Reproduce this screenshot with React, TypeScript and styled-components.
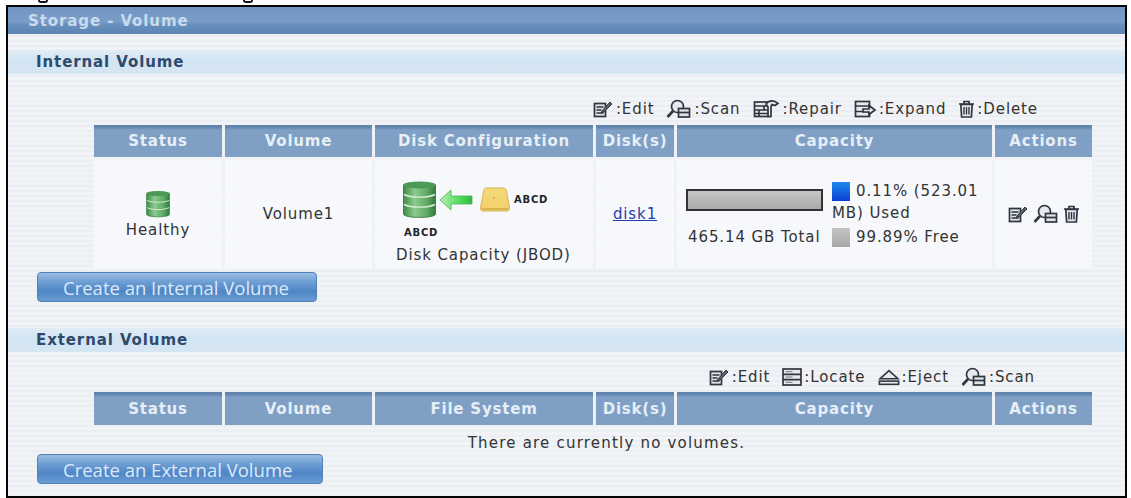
import styled, { createGlobalStyle } from "styled-components";

const GlobalStyle = createGlobalStyle`
  html, body {
    margin: 0;
    padding: 0;
    background: #ffffff;
  }
`;

const BODY_FONT = `"DejaVu Sans", Verdana, sans-serif`;

const EditIcon = () => (
  <svg width="21" height="20" viewBox="0 0 21 20" fill="none" stroke="#2f3641" strokeWidth="1.7">
    <rect x="1.5" y="4.5" width="11" height="13" fill="#dfe3e8" />
    <path d="M3.5 8h7M3.5 11h5M3.5 14h7" />
    <path d="M9 12l8-9 2 2-8 8-3 1z" fill="#59616d" stroke="#2f3641" strokeWidth="1" />
  </svg>
);

const ScanIcon = () => (
  <svg width="26" height="20" viewBox="0 0 26 20" fill="none" stroke="#2f3641" strokeWidth="1.7">
    <circle cx="11.5" cy="7.5" r="6" fill="#e6e9ee" />
    <path d="M7 12L1.5 18" strokeWidth="2.6" />
    <rect x="12.5" y="9.5" width="11" height="8.5" fill="#dfe3e8" />
    <path d="M12.5 13.5h11" />
  </svg>
);

const RepairIcon = () => (
  <svg width="28" height="20" viewBox="0 0 28 20" fill="none" stroke="#2f3641" strokeWidth="1.7">
    <rect x="1.5" y="3" width="15" height="14.5" fill="#e6e9ee" />
    <path d="M1.5 7h15M1.5 11h15M1.5 14.5h15M6 11v6.5M11 7v4" />
    <path d="M13 5c3-4 8-4 12-.5l-3 2-3-1-1 2v10h-3V8z" fill="#e6e9ee" />
  </svg>
);

const ExpandIcon = () => (
  <svg width="23" height="20" viewBox="0 0 23 20" fill="none" stroke="#2f3641" strokeWidth="1.7">
    <rect x="1.5" y="2.5" width="14" height="15" fill="#e6e9ee" />
    <path d="M1.5 7h14M1.5 12.5h14" />
    <path d="M9 10h6V6.5l6 4.5-6 4.5V13H9z" fill="#e6e9ee" />
  </svg>
);

const TrashIcon = () => (
  <svg width="17" height="20" viewBox="0 0 17 20" fill="none" stroke="#2f3641" strokeWidth="1.7">
    <path d="M1 5h15M6 5V2.5h5V5" />
    <path d="M2.8 5.5l.8 12.5h9.8l.8-12.500z" fill="#e6e9ee" />
    <path d="M6 8v7.5M8.5 8v7.5M11 8v7.5" strokeWidth="1.4" />
  </svg>
);

const LocateIcon = () => (
  <svg width="20" height="20" viewBox="0 0 20 20" fill="none" stroke="#2f3641" strokeWidth="1.7">
    <rect x="1" y="2" width="18" height="16" fill="#e6e9ee" />
    <path d="M1 7.3h18M1 12.6h18" />
    <path d="M3.5 4.7h7M3.5 10h7M3.5 15.3h7" strokeWidth="1" stroke="#6f7680" />
  </svg>
);

const EjectIcon = () => (
  <svg width="22" height="20" viewBox="0 0 24 20" fill="none" stroke="#2f3641" strokeWidth="1.7">
    <path d="M12 3L22 12H2z" fill="#e6e9ee" />
    <rect x="1.5" y="14.5" width="21" height="3.5" fill="#e6e9ee" />
  </svg>
);

const Cylinder = ({ id, width, height }: { id: string; width: number; height: number }) => (
  <svg width={width} height={height} viewBox="0 0 33 39">
    <defs>
      <linearGradient id={id} x1="0" x2="1" y1="0" y2="0">
        <stop offset="0" stopColor="#3f8a48" />
        <stop offset="0.35" stopColor="#8ccb8d" />
        <stop offset="0.75" stopColor="#5da865" />
        <stop offset="1" stopColor="#2f7a3a" />
      </linearGradient>
    </defs>
    <path d="M0.5 5C0.5 2 32.5 2 32.5 5V34C32.5 38.5 0.5 38.5 0.5 34Z" fill={`url(#${id})`} stroke="#3d8547" />
    <ellipse cx="16.5" cy="5" rx="16" ry="3.6" fill="#4c9a55" />
    <path d="M1 14.5C8 18 25 18 32 14.5M1 24.5C8 28 25 28 32 24.5" fill="none" stroke="#d6eed6" strokeWidth="1.4" />
  </svg>
);

const GreenArrow = () => (
  <svg width="34" height="22" viewBox="0 0 34 22">
    <defs>
      <linearGradient id="arrowFill" x1="0" x2="1" y1="0" y2="0">
        <stop offset="0" stopColor="#b7f0b7" />
        <stop offset="0.6" stopColor="#55dc5c" />
        <stop offset="1" stopColor="#34b53e" />
      </linearGradient>
    </defs>
    <path d="M1 11L12 1v6h21v8H12v6z" fill="url(#arrowFill)" stroke="#48b650" strokeWidth="0.8" />
  </svg>
);

const YellowDisk = () => (
  <svg width="30" height="25" viewBox="0 0 30 25">
    <defs>
      <linearGradient id="diskFill" x1="0" x2="0" y1="0" y2="1">
        <stop offset="0" stopColor="#f6d878" />
        <stop offset="1" stopColor="#f2d06c" />
      </linearGradient>
    </defs>
    <path d="M7 1h16c2 0 3 1 3.5 3L29.5 21c.3 2-.7 3-2.5 3H3c-1.800 0-2.800-1-2.500-3L3.500 4C4 2 5 1 7 1z" fill="url(#diskFill)" stroke="#d9b557" />
    <circle cx="14" cy="11" r="1" fill="#d9b04c" />
    <path d="M2 22h26" stroke="#c9a341" strokeWidth="1.2" />
  </svg>
);

const CaptionTails = styled.div`
  display: flex;
  height: 5px;
  padding-left: 38px;
  gap: 195px;
  overflow: hidden;
`;

const Tail = styled.span`
  display: block;
  width: 10px;
  height: 3px;
  border: 2px solid #111;
  border-top: none;
  border-radius: 0 0 6px 6px;
  box-sizing: border-box;
`;

const Frame = styled.div`
  box-sizing: border-box;
  width: 1121px;
  height: 493px;
  margin-left: 6px;
  border: 2px solid #050505;
  overflow: hidden;
  font-family: ${BODY_FONT};
  font-size: 15px;
  letter-spacing: 0.9px;
  color: #333333;
  background: repeating-linear-gradient(to bottom, #f1f3f6 0 3px, #ebeef2 3px 5px);
`;

const TitleBar = styled.div`
  height: 27px;
  padding-left: 20px;
  display: flex;
  align-items: center;
  font-weight: 700;
  color: #c9dbec;
  background: linear-gradient(to bottom, #7296c3 0, #7a9dc8 55%, #6890bd 65%, #5c85b3 100%);
`;

const SectionBar = styled.div<{ $top: number }>`
  height: 24px;
  margin-top: ${(p) => p.$top}px;
  padding-left: 28px;
  display: flex;
  align-items: center;
  font-weight: 700;
  color: #2e4a6c;
  background: linear-gradient(to bottom, #e1ecf5 0, #d3e4f2 40%, #d5e5f2 100%);
`;

const Legend = styled.div<{ $top: number; $pad: number }>`
  height: 20px;
  margin-top: ${(p) => p.$top}px;
  padding-right: ${(p) => p.$pad}px;
  display: flex;
  justify-content: flex-end;
  align-items: center;
`;

const LegendItem = styled.span`
  display: flex;
  align-items: center;
  margin-left: 12px;
  gap: 2px;
`;

const Grid = styled.div<{ $top: number }>`
  display: grid;
  grid-template-columns: 128px 147px 218px 78px 315px 97px;
  column-gap: 3px;
  width: 998px;
  margin-top: ${(p) => p.$top}px;
  margin-left: 86px;
`;

const HeadCell = styled.div<{ $height: number }>`
  height: ${(p) => p.$height}px;
  display: flex;
  align-items: center;
  justify-content: center;
  font-weight: 700;
  letter-spacing: 0.8px;
  color: #e6eef6;
  background: linear-gradient(to bottom, #5f84ad 0, #5f84ad 2px, #7f9fc5 5px, #7f9fc5 100%);
`;

const BodyCell = styled.div`
  height: 108px;
  margin-top: 3px;
  display: flex;
  flex-direction: column;
  align-items: center;
  justify-content: center;
  background: #f6f8fb;
`;

const HealthyText = styled.span`
  margin-top: 3px;
`;

const DiskCell = styled(BodyCell)`
  box-sizing: border-box;
  justify-content: flex-start;
  padding-top: 20px;
`;

const DiskColumn = styled.div`
  display: flex;
  flex-direction: column;
  align-items: flex-start;
  width: 176px;
`;

const DiskDiagram = styled.div`
  width: 176px;
  display: grid;
  grid-template-columns: 36px 41px auto;
  align-items: center;
  justify-items: start;
  padding-left: 7px;
  box-sizing: border-box;
`;

const DiskRow = styled.div`
  display: flex;
  align-items: center;
  gap: 4px;
`;

const TinyLabel = styled.span`
  font-size: 10px;
  font-weight: 700;
  letter-spacing: 0.8px;
  color: #22252a;
`;

const UnderCylinder = styled.div`
  padding-left: 8px;
  margin-top: 7px;
  line-height: 10px;
`;

const CapacityCaption = styled.div`
  margin-top: 8px;
  line-height: 18px;
  white-space: nowrap;
`;

const DiskLink = styled.a`
  color: #1f3fae;
  text-decoration: underline;
`;

const CapacityCell = styled(BodyCell)`
  display: grid;
  grid-template-columns: 146px 1fr;
  grid-template-rows: 46px 25px;
  align-items: start;
  justify-content: stretch;
  align-content: start;
  padding: 20px 0 0 9px;
  box-sizing: border-box;
`;

const Meter = styled.div`
  box-sizing: border-box;
  width: 137px;
  height: 22px;
  margin-top: 9px;
  border: 2px solid #333;
  background: linear-gradient(to bottom, #c7c7c7, #a9a9a9);
`;

const LegendText = styled.div`
  line-height: 22px;
  width: 150px;
`;

const Swatch = styled.span<{ $kind: "used" | "free" }>`
  display: inline-block;
  width: 18px;
  height: 19px;
  margin-right: 6px;
  vertical-align: -5px;
  background: ${(p) =>
    p.$kind === "used"
      ? "linear-gradient(to bottom, #1f8af0, #0a3fd0)"
      : "linear-gradient(to bottom, #c4c4c4, #a8a8a8)"};
`;

const TotalText = styled.div`
  padding-left: 2px;
  line-height: 22px;
  white-space: nowrap;
`;

const ActionIcons = styled.div`
  display: flex;
  align-items: center;
  gap: 4px;
`;

const EmptyMessage = styled.div`
  height: 18px;
  margin-top: 9px;
  padding-left: 80px;
  text-align: center;
  line-height: 18px;
  letter-spacing: 1.2px;
`;

const CreateButton = styled.button<{ $width: number; $top: number }>`
  display: block;
  box-sizing: border-box;
  width: ${(p) => p.$width}px;
  height: 30px;
  margin-top: ${(p) => p.$top}px;
  margin-left: 29px;
  padding: 0 0 0 25px;
  border: 1px solid #4f80ba;
  border-radius: 4px;
  font-family: "Open Sans", sans-serif;
  font-size: 18.5px;
  text-align: left;
  white-space: nowrap;
  color: #dce9f7;
  background: linear-gradient(to bottom, #9dbde3 0, #6f9fd4 30%, #4f86c6 65%, #6b9cd3 100%);
`;

const internalHeads = ["Status", "Volume", "Disk Configuration", "Disk(s)", "Capacity", "Actions"];
const externalHeads = ["Status", "Volume", "File System", "Disk(s)", "Capacity", "Actions"];

const App = () => {
  return (
    <>
      <GlobalStyle />
      <CaptionTails>
        <Tail />
        <Tail />
      </CaptionTails>
      <Frame>
        <TitleBar>Storage - Volume</TitleBar>

        <SectionBar $top={16}>Internal Volume</SectionBar>
        <Legend $top={25} $pad={87}>
          <LegendItem><EditIcon />:Edit</LegendItem>
          <LegendItem><ScanIcon />:Scan</LegendItem>
          <LegendItem><RepairIcon />:Repair</LegendItem>
          <LegendItem><ExpandIcon />:Expand</LegendItem>
          <LegendItem><TrashIcon />:Delete</LegendItem>
        </Legend>
        <Grid $top={6}>
          {internalHeads.map((h) => (
            <HeadCell key={h} $height={32}>{h}</HeadCell>
          ))}
          <BodyCell>
            <Cylinder id="healthyCyl" width={24} height={28} />
            <HealthyText>Healthy</HealthyText>
          </BodyCell>
          <BodyCell>Volume1</BodyCell>
          <DiskCell>
            <DiskColumn>
              <DiskDiagram>
                <Cylinder id="bigCyl" width={33} height={39} />
                <GreenArrow />
                <DiskRow>
                  <YellowDisk />
                  <TinyLabel>ABCD</TinyLabel>
                </DiskRow>
              </DiskDiagram>
              <UnderCylinder>
                <TinyLabel>ABCD</TinyLabel>
              </UnderCylinder>
              <CapacityCaption>Disk Capacity (JBOD)</CapacityCaption>
            </DiskColumn>
          </DiskCell>
          <BodyCell>
            <DiskLink href="#">disk1</DiskLink>
          </BodyCell>
          <CapacityCell>
            <Meter />
            <LegendText>
              <Swatch $kind="used" />0.11% (523.01 MB) Used
            </LegendText>
            <TotalText>465.14 GB Total</TotalText>
            <LegendText>
              <Swatch $kind="free" />99.89% Free
            </LegendText>
          </CapacityCell>
          <BodyCell>
            <ActionIcons>
              <EditIcon />
              <ScanIcon />
              <TrashIcon />
            </ActionIcons>
          </BodyCell>
        </Grid>
        <CreateButton $width={280} $top={4}>Create an Internal Volume</CreateButton>

        <SectionBar $top={26}>External Volume</SectionBar>
        <Legend $top={15} $pad={90}>
          <LegendItem><EditIcon />:Edit</LegendItem>
          <LegendItem><LocateIcon />:Locate</LegendItem>
          <LegendItem><EjectIcon />:Eject</LegendItem>
          <LegendItem><ScanIcon />:Scan</LegendItem>
        </Legend>
        <Grid $top={5}>
          {externalHeads.map((h) => (
            <HeadCell key={h} $height={33}>{h}</HeadCell>
          ))}
        </Grid>
        <EmptyMessage>There are currently no volumes.</EmptyMessage>
        <CreateButton $width={286} $top={2}>Create an External Volume</CreateButton>
      </Frame>
    </>
  );
};

export default App;
